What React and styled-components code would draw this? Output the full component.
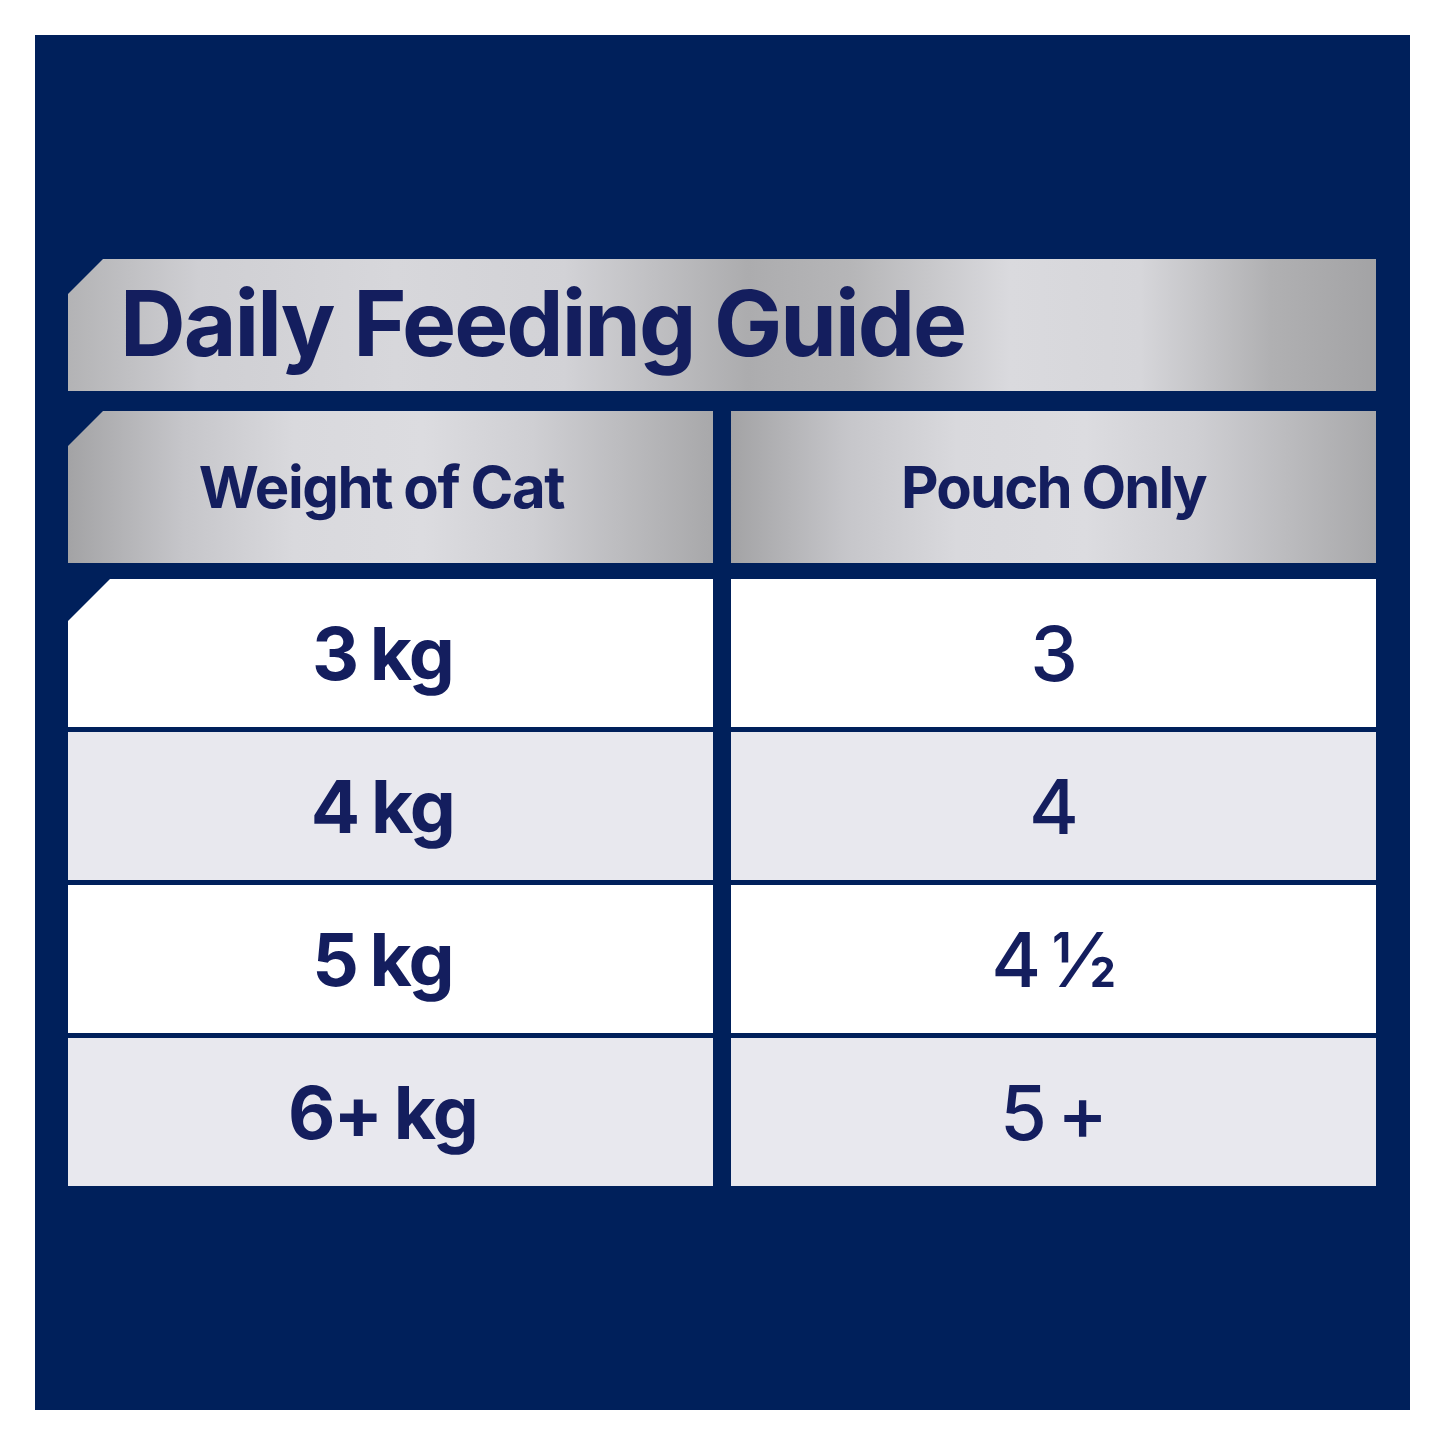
import React from "react";
import styled, { createGlobalStyle } from "styled-components";

const Global = createGlobalStyle`
  html, body { margin: 0; padding: 0; background: #ffffff; }
  body { font-family: Inter, "Noto Sans", "Liberation Sans", sans-serif; }
`;

const Page = styled.div`
  width: 1445px;
  height: 1445px;
  padding: 35px;
  box-sizing: border-box;
  background: #ffffff;
`;

const Panel = styled.div`
  width: 1375px;
  height: 1375px;
  box-sizing: border-box;
  background: #00205b;
  padding: 0 34px 0 33px;
  display: flex;
  flex-direction: column;
  justify-content: center;
`;

const silverTitle = `linear-gradient(90deg,
  #b3b3b5 0%, #cfcfd3 10%, #d7d7db 25%, #d2d2d6 38%, #acacae 52%,
  #b6b6b8 60%, #dadade 72%, #d6d6da 82%, #b0b0b2 92%, #a3a3a5 100%)`;

const silverCell = `linear-gradient(90deg,
  #a3a3a5 0%, #c6c6ca 18%, #d9d9dd 35%, #dcdce0 55%, #cfcfd3 72%, #a8a8aa 100%)`;

const TitleBar = styled.div`
  height: 132px;
  background: ${silverTitle};
  clip-path: polygon(35px 0, 100% 0, 100% 100%, 0 100%, 0 35px);
  display: flex;
  align-items: center;
  padding-left: 52px;
  padding-bottom: 3px;
  box-sizing: border-box;
`;

const Title = styled.h1`
  margin: 0;
  font-family: Inter, "Liberation Sans", sans-serif;
  font-weight: 700;
  font-size: 91px;
  letter-spacing: -2px;
  color: #141e5e;
  line-height: 1;
`;

const HeaderRow = styled.div`
  margin-top: 20px;
  display: grid;
  grid-template-columns: 1fr 1fr;
  column-gap: 18px;
`;

const HeaderCell = styled.div`
  height: 152px;
  box-sizing: border-box;
  background: ${silverCell};
  display: flex;
  align-items: center;
  justify-content: center;
  clip-path: ${(p) =>
    p.$cut
      ? "polygon(35px 0, 100% 0, 100% 100%, 0 100%, 0 35px)"
      : "none"};
  font-family: Inter, "Liberation Sans", sans-serif;
  font-weight: 700;
  font-size: 58px;
  letter-spacing: ${(p) => (p.$cut ? "-1.4px" : "-1.9px")};
  word-spacing: -1px;
  color: #141e5e;
  padding-right: ${(p) => (p.$cut ? "18px" : "0")};
`;

const Body = styled.div`
  margin-top: 16px;
  display: grid;
  grid-template-columns: 1fr 1fr;
  column-gap: 18px;
  row-gap: 5px;
`;

const Cell = styled.div`
  height: 148px;
  box-sizing: border-box;
  background: ${(p) => (p.$alt ? "#e8e8ee" : "#ffffff")};
  display: flex;
  align-items: center;
  justify-content: center;
  clip-path: ${(p) =>
    p.$cut
      ? "polygon(42px 0, 100% 0, 100% 100%, 0 100%, 0 42px)"
      : "none"};
  font-family: Inter, "Liberation Sans", sans-serif;
  font-weight: ${(p) => (p.$bold ? 700 : 500)};
  font-size: ${(p) => (p.$bold ? "73px" : "76px")};
  letter-spacing: ${(p) => (p.$bold ? "-1.8px" : "-1px")};
  word-spacing: ${(p) => (p.$bold ? "-3px" : "-8px")};
  color: #141e5e;
  padding-right: ${(p) => (p.$bold ? "16px" : "0")};
`;

const rows = [
  ["3 kg", "3"],
  ["4 kg", "4"],
  ["5 kg", "4 ½"],
  ["6+ kg", "5 +"],
];

export default function App() {
  return (
    <>
      <Global />
      <Page>
        <Panel>
          <TitleBar>
            <Title>Daily Feeding Guide</Title>
          </TitleBar>
          <HeaderRow>
            <HeaderCell $cut>Weight of Cat</HeaderCell>
            <HeaderCell>Pouch Only</HeaderCell>
          </HeaderRow>
          <Body>
            {rows.map(([w, p], i) => (
              <React.Fragment key={w}>
                <Cell $bold $alt={i % 2 === 1} $cut={i === 0}>
                  {w}
                </Cell>
                <Cell $alt={i % 2 === 1}>{p}</Cell>
              </React.Fragment>
            ))}
          </Body>
        </Panel>
      </Page>
    </>
  );
}
